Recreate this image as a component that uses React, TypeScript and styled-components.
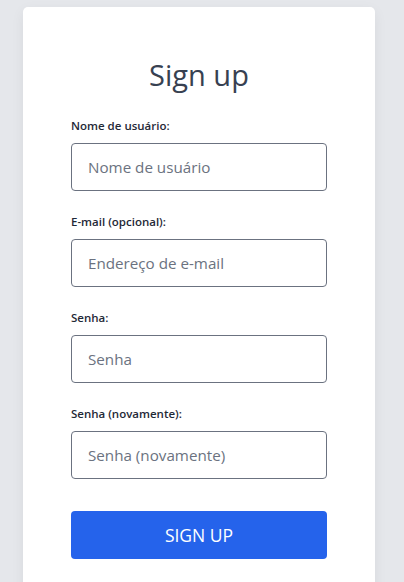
import styled, { createGlobalStyle } from 'styled-components'

const GlobalStyle = createGlobalStyle`
  html, body {
    margin: 0;
    padding: 0;
    background: #e5e7eb;
    font-family: "Open Sans", "Noto Sans", Arial, sans-serif;
  }
`

const Page = styled.div`
  display: flex;
  justify-content: center;
  padding: 7px 29px 0 23px;
`

const Card = styled.form`
  width: 352px;
  box-sizing: border-box;
  background: #fff;
  border-radius: 5px;
  box-shadow: 0 4px 14px rgba(0, 0, 0, 0.06);
  padding: 48px 48px 48px;
  display: flex;
  flex-direction: column;
`

const Title = styled.h1`
  margin: 0 0 22px;
  font-size: 29px;
  line-height: 40px;
  font-weight: 400;
  color: #374151;
  text-align: center;
`

const Field = styled.div`
  display: flex;
  flex-direction: column;
  margin-bottom: 22px;
`

const Label = styled.label`
  font-size: 11.5px;
  line-height: 18px;
  font-weight: 600;
  color: #1f2937;
  margin-bottom: 8px;
`

const Input = styled.input`
  height: 48px;
  box-sizing: border-box;
  border: 1px solid #6b7280;
  border-radius: 4px;
  padding: 0 16px;
  font-family: inherit;
  font-size: 15.2px;
  color: #111827;
  background: #fff;
  outline: none;
  &::placeholder {
    color: #6b7280;
  }
`

const Button = styled.button`
  margin-top: 10px;
  height: 48px;
  border: none;
  border-radius: 4px;
  background: #2563eb;
  color: #fff;
  font-family: inherit;
  font-size: 17.5px;
  text-transform: uppercase;
  cursor: pointer;
`

const fields = [
  { label: 'Nome de usuário:', placeholder: 'Nome de usuário', type: 'text' },
  { label: 'E-mail (opcional):', placeholder: 'Endereço de e-mail', type: 'email' },
  { label: 'Senha:', placeholder: 'Senha', type: 'password' },
  { label: 'Senha (novamente):', placeholder: 'Senha (novamente)', type: 'password' },
]

export default function App() {
  return (
    <>
      <GlobalStyle />
      <Page>
        <Card onSubmit={e => e.preventDefault()}>
          <Title>Sign up</Title>
          {fields.map(f => (
            <Field key={f.label}>
              <Label>{f.label}</Label>
              <Input type={f.type} placeholder={f.placeholder} />
            </Field>
          ))}
          <Button type="submit">Sign up</Button>
        </Card>
      </Page>
    </>
  )
}
